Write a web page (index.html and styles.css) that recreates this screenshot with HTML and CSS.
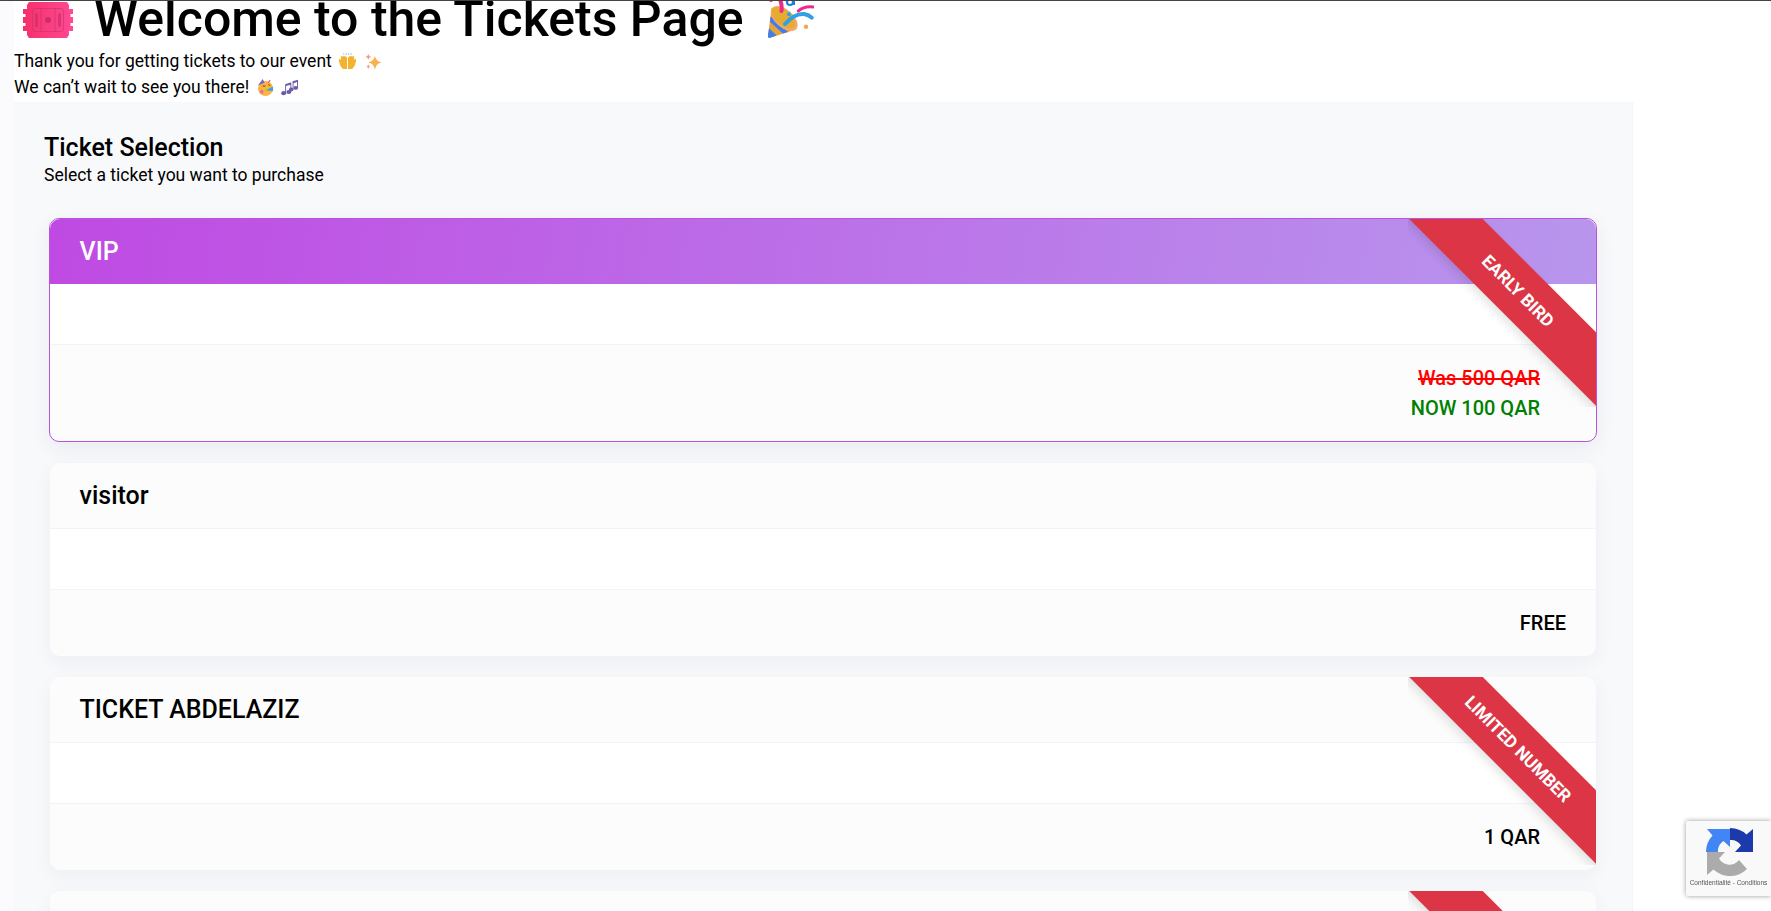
FILE: index.html
```html
<!DOCTYPE html>
<html lang="en">
<head>
  <meta charset="UTF-8" />
  <title>Tickets</title>
  <link rel="stylesheet" href="styles.css">
</head>
<body>
  <div class="topline"></div>
  <div class="page">
    <div class="intro">
      <h1>
        <svg class="emoji-ticket" viewBox="0 0 50 36" aria-hidden="true">
          <defs>
            <linearGradient id="ticketFill" x1="0" x2="1" y1="0" y2="0">
              <stop offset="0" stop-color="#f5306a"/>
              <stop offset="1" stop-color="#ff4a94"/>
            </linearGradient>
          </defs>
          <path fill="url(#ticketFill)" d="M6 0H44L46 3V7H50V12H47.500V15H50V21H47.500V24H50V29H46V33L44 36H6L4 33V29H0V24H2.500V21H0V15H2.500V12H0V7H4V3Z"/>
          <rect x="9.500" y="6.500" width="31" height="23" rx="2.500" fill="none" stroke="#c9306a" stroke-width="1" opacity=".6"/>
          <path d="M18 6.500V29.500M32 6.500V29.500" stroke="#c9306a" stroke-width="1" opacity=".6"/>
          <circle cx="25" cy="18" r="3" fill="#c9306a"/>
          <rect x="12" y="11" width="3" height="14" rx="1.500" fill="#c9306a" opacity=".7"/>
          <rect x="35" y="11" width="3" height="14" rx="1.500" fill="#c9306a" opacity=".7"/>
        </svg>
        <span class="h1-text">Welcome to the Tickets Page</span>
        <svg class="emoji-popper" viewBox="0 0 47 44" aria-hidden="true">
          <path d="M4.700 11.700L1 39Q.6 43 4 41.500L29.700 33.300Z" fill="#e8a33a"/>
          <path d="M3.600 20.500L21.100 35.900L15.900 37.500L2.900 25.800Z" fill="#3f7fe8"/>
          <path d="M2.100 32.200L9.600 39.400L4 41.500Q.6 43 1 39Z" fill="#3f7fe8"/>
          <ellipse cx="17.200" cy="22.500" rx="9" ry="16" transform="rotate(-49 17.200 22.500)" fill="#f2a86a"/>
          <ellipse cx="16.500" cy="21.500" rx="7.500" ry="14" transform="rotate(-49 16.500 21.500)" fill="#e6ac30"/>
          <path d="M18 28Q28 17 37 18Q42 19 44.700 21.700" fill="none" stroke="#2fa1e6" stroke-width="4" stroke-linecap="round"/>
          <path d="M11.300 0Q15.500 7 14.500 15" fill="none" stroke="#f02a8c" stroke-width="4" stroke-linecap="round"/>
          <path d="M31.300 15Q37 10 46 11" fill="none" stroke="#f02a8c" stroke-width="3" stroke-linecap="round"/>
          <circle cx="23" cy="6" r="3" fill="none" stroke="#2080d8" stroke-width="2.200"/>
          <path d="M27 0V9" stroke="#2080d8" stroke-width="2"/>
          <circle cx="4" cy="4" r="2" fill="#d92f9a"/>
          <circle cx="37.300" cy="2.300" r="2" fill="#d92f9a"/>
          <circle cx="22" cy="18.300" r="2" fill="#2fa1e6"/>
          <circle cx="39" cy="30.700" r="2.200" fill="#f2a65a"/>
        </svg>
      </h1>
      <p class="lead">
        Thank you for getting tickets to our event
        <svg class="emoji" viewBox="0 0 20 18" aria-hidden="true">
          <path d="M9.500 17H5Q2 14 1 9Q.5 6 2 6L3 8V4Q4 2.500 5 4Q6 2.500 7 3.500Q8.500 3 9.500 5Z" fill="#f3b22f"/>
          <path d="M10.500 17H15Q18 14 19 9Q19.500 6 18 6L17 8V4Q16 2.500 15 4Q14 2.500 13 3.500Q11.500 3 10.500 5Z" fill="#f3b22f"/>
          <path d="M6 1.500V.5M8.500 1.800L9 .6M11.500 1.800L11 .6M14 1.500V.5" stroke="#3c7fd0" stroke-width=".8"/>
        </svg>
        <svg class="emoji emoji-gap" viewBox="0 0 18 18" aria-hidden="true">
          <path d="M10.500 3Q11.500 9 17.500 10Q11.500 11 10.500 18Q9.500 11 3.500 10Q9.500 9 10.500 3Z" fill="#fbb04e"/>
          <path d="M3.500 1Q4 3.500 6.500 4Q4 4.500 3.500 7Q3 4.500 .5 4Q3 3.500 3.500 1Z" fill="#f79a78"/>
          <path d="M3.500 12Q3.800 14 5.500 14.500Q3.800 15 3.500 17Q3.200 15 1.500 14.500Q3.200 14 3.500 12Z" fill="#f79a78"/>
        </svg>
        <br>
        We can’t wait to see you there!
        <svg class="emoji" viewBox="0 0 18 18" aria-hidden="true">
          <circle cx="9" cy="10" r="8" fill="#f9b63c"/>
          <path d="M1 7L6 0L8 4Z" fill="#7a62c8"/>
          <circle cx="5" cy="13.500" r="2" fill="#f0709a"/>
          <path d="M6 7.500H9M12 6L14 7" stroke="#5a3c20" stroke-width="1"/>
          <path d="M9 12L17 8V13Z" fill="#3ea6d8"/>
          <path d="M14 1L12 4" stroke="#e8408c" stroke-width="1.200"/>
        </svg>
        <svg class="emoji emoji-notes" viewBox="0 0 18 18" aria-hidden="true">
          <g fill="#6c5ba8">
            <ellipse cx="2.800" cy="15" rx="2.600" ry="2.200"/>
            <ellipse cx="8.300" cy="13.800" rx="2.600" ry="2.200"/>
            <path d="M4.400 15V5.500L10.900 3.500V13.800H9.900V6.200L5.400 7.500V15Z"/>
            <ellipse cx="10.800" cy="11" rx="2.400" ry="2"/>
            <ellipse cx="15.600" cy="9.500" rx="2.400" ry="2"/>
            <path d="M12.300 11V2.500L18 .8V9.500H17V3.300L13.300 4.400V11Z"/>
          </g>
        </svg>
      </p>
    </div>

    <div class="panel">
      <h2 class="panel-title">Ticket Selection</h2>
      <p class="panel-sub">Select a ticket you want to purchase</p>

      <div class="card card-selected">
        <div class="ribbon"><span>Early Bird</span></div>
        <div class="card-head">VIP</div>
        <div class="card-body"></div>
        <div class="card-foot card-foot-ribbon">
          <div class="price-old">Was 500 QAR</div>
          <div class="price-new">NOW 100 QAR</div>
        </div>
      </div>

      <div class="card">
        <div class="card-head">visitor</div>
        <div class="card-body"></div>
        <div class="card-foot">
          <div class="price">FREE</div>
        </div>
      </div>

      <div class="card">
        <div class="ribbon"><span>Limited Number</span></div>
        <div class="card-head">TICKET ABDELAZIZ</div>
        <div class="card-body"></div>
        <div class="card-foot card-foot-ribbon">
          <div class="price">1 QAR</div>
        </div>
      </div>

      <div class="card">
        <div class="ribbon"><span></span></div>
        <div class="card-head">&nbsp;</div>
      </div>
    </div>
  </div>

  <div class="recaptcha">
    <svg class="recaptcha-logo" viewBox="-24 -24 48 48" aria-hidden="true">
      <path fill="#1c3aa9" d="M0 -24A24 24 0 0 1 16.500 -17.500L23 -23V0H5L11 -6.500A12 12 0 0 0 0 -12Z"/>
      <path fill="#4285f4" d="M-24 0A24 24 0 0 1 -17.500 -16.500L-23 -23H0V-5L-6.500 -11A12 12 0 0 0 -12 0Z"/>
      <path fill="#ababab" d="M-23 0H-5L-11 6.500A12 12 0 0 0 9 8L17 17A24 24 0 0 1 -16.500 17.500L-23 23Z"/>
    </svg>
    <div class="recaptcha-text">Confidentialité - Conditions</div>
  </div>
</body>
</html>
```

FILE: styles.css
```css
html, body {
  height: 100%;
  overflow: hidden;
}
body {
  margin: 0;
  background: #fff;
  font-family: Roboto, "Liberation Sans", sans-serif;
  font-size: 17.500px;
  color: #000;
}
.topline {
  position: relative;
  z-index: 2;
  height: 1px;
  background: #444;
}
.page {
  width: 1619px;
  margin-left: 14px;
  box-shadow: -14px 0 0 #fbfbfd;
}
.intro {
  margin-top: -14px;
  height: 115px;
  background: #fff;
}
h1 {
  margin: 0;
  height: 56px;
  padding-top: 4px;
  display: flex;
  align-items: center;
  font-size: 50px;
  line-height: 56px;
  font-weight: 500;
}
.h1-text {
  margin-left: 21px;
}
.emoji-ticket {
  width: 50px;
  height: 36px;
  margin-left: 9px;
  margin-top: 2px;
}
.emoji-popper {
  width: 47px;
  height: 44px;
  margin-left: 23px;
  margin-top: -3px;
}
.lead {
  margin: 0;
  line-height: 25.500px;
  padding-top: 2px;
}
.emoji {
  width: 19px;
  height: 17px;
  vertical-align: -3px;
  margin-left: 2px;
}
.emoji-gap {
  margin-left: 3px;
}
.emoji-notes {
  margin-left: 1px;
}
.panel {
  background: #f8f9fb;
  border-right: 1px solid #f3f4f7;
  padding: 31px 35px 30px 30px;
}
.panel-title {
  margin: 0;
  font-size: 25px;
  line-height: 30px;
  font-weight: 500;
}
.panel-sub {
  margin: 0 0 31px;
  line-height: 24px;
}
.card {
  position: relative;
  margin: 0 1px 21px 6px;
  border-radius: 10px;
  background: #fcfcfd;
  box-shadow: 0 6px 20px rgba(30, 40, 80, .05);
}
.card-selected {
  margin-left: 5px;
  margin-right: 0;
  border: 1px solid #b954da;
  box-shadow: 0 6px 20px rgba(30, 40, 80, .07);
}
.card-head {
  padding: 20px 29.500px;
  font-size: 25px;
  line-height: 25px;
  font-weight: 500;
  border-bottom: 1px solid #f3f3f7;
  border-radius: 10px 10px 0 0;
}
.card-selected .card-head {
  background: linear-gradient(100deg, #bf4ae3, #b896ed);
  color: #fff;
  border-bottom: 0;
}
.card-body {
  height: 60px;
  background: #fff;
  border-bottom: 1px solid #f3f3f7;
}
.card-foot {
  padding: 18px 30px;
  text-align: right;
  font-size: 20px;
  line-height: 30px;
  font-weight: 500;
  border-radius: 0 0 10px 10px;
}
.card-foot-ribbon {
  padding-right: 56px;
}
.price-old {
  color: #f00;
  text-decoration: line-through;
}
.price-new {
  color: #008000;
}
.ribbon {
  position: absolute;
  top: 0;
  right: 0;
  width: 188px;
  height: 188px;
  overflow: hidden;
}
.ribbon span {
  position: absolute;
  left: -40px;
  top: 46px;
  width: 300px;
  height: 52px;
  line-height: 52px;
  text-align: center;
  transform: rotate(45deg);
  background: #dc3545;
  color: #fff;
  font-size: 17.400px;
  font-weight: 700;
  text-transform: uppercase;
  box-shadow: 0 5px 10px rgba(0, 0, 0, .1);
}
.recaptcha {
  position: fixed;
  right: 0;
  bottom: 15px;
  width: 85px;
  height: 75px;
  background: #f9f9f9;
  border-radius: 2px 0 0 2px;
  box-shadow: 0 0 5px rgba(0, 0, 0, .4);
  text-align: center;
  overflow: hidden;
}
.recaptcha-logo {
  display: block;
  width: 48px;
  height: 48px;
  margin: 7px 0 0 20px;
}
.recaptcha-text {
  font-family: "Liberation Sans", sans-serif;
  font-size: 6.500px;
  line-height: 8px;
  margin-top: 3px;
  color: #555;
  white-space: nowrap;
}
```
